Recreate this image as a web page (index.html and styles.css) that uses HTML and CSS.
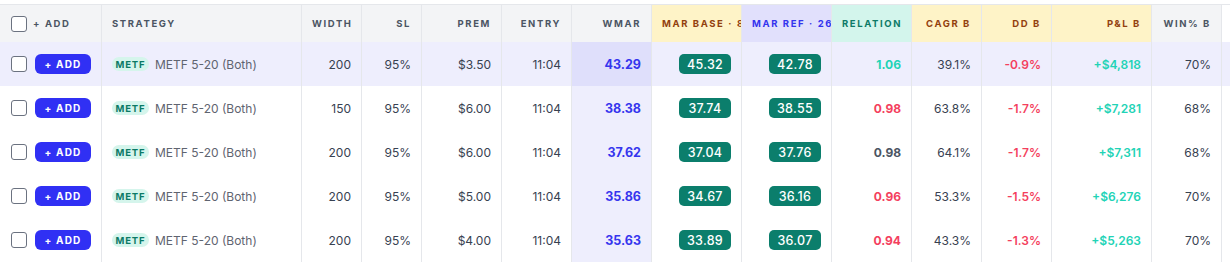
FILE: index.html
```html
<!DOCTYPE html>
<html>
<head>
<meta charset="utf-8">
<link rel="stylesheet" href="styles.css">
</head>
<body>
<div class="wrap">
<table class="grid">
<colgroup>
<col class="c-sel"><col class="c-strat"><col class="c-60"><col class="c-60"><col class="c-80"><col class="c-70"><col class="c-80"><col class="c-90"><col class="c-90"><col class="c-80"><col class="c-70"><col class="c-70"><col class="c-100"><col class="c-70"><col class="c-100">
</colgroup>
<thead>
<tr>
<th class="left"><div class="selhead"><span class="cb"></span><span>+ ADD</span></div></th>
<th class="left">STRATEGY</th>
<th>WIDTH</th>
<th>SL</th>
<th>PREM</th>
<th>ENTRY</th>
<th>WMAR</th>
<th class="left h-base clip">MAR BASE · 8W</th>
<th class="left h-ref clip">MAR REF · 26W</th>
<th class="h-rel">RELATION</th>
<th class="h-base">CAGR B</th>
<th class="h-base">DD B</th>
<th class="h-base">P&amp;L B</th>
<th>WIN% B</th>
<th class="h-blank"></th>
</tr>
</thead>
<tbody>
<tr class="sel">
<td><div class="selcell"><span class="cb"></span><span class="addbtn">+ ADD</span></div></td>
<td class="left"><div class="strat"><span class="pill">METF</span><span class="sname">METF 5-20 (Both)</span></div></td>
<td>200</td><td>95%</td><td>$3.50</td><td>11:04</td>
<td class="wmar">43.29</td>
<td><span class="badge">45.32</span></td>
<td><span class="badge">42.78</span></td>
<td class="pos b">1.06</td>
<td>39.1%</td>
<td class="neg m">-0.9%</td>
<td class="pos m">+$4,818</td>
<td>70%</td>
<td></td>
</tr>
<tr>
<td><div class="selcell"><span class="cb"></span><span class="addbtn">+ ADD</span></div></td>
<td class="left"><div class="strat"><span class="pill">METF</span><span class="sname">METF 5-20 (Both)</span></div></td>
<td>150</td><td>95%</td><td>$6.00</td><td>11:04</td>
<td class="wmar">38.38</td>
<td><span class="badge">37.74</span></td>
<td><span class="badge">38.55</span></td>
<td class="neg b">0.98</td>
<td>63.8%</td>
<td class="neg m">-1.7%</td>
<td class="pos m">+$7,281</td>
<td>68%</td>
<td></td>
</tr>
<tr>
<td><div class="selcell"><span class="cb"></span><span class="addbtn">+ ADD</span></div></td>
<td class="left"><div class="strat"><span class="pill">METF</span><span class="sname">METF 5-20 (Both)</span></div></td>
<td>200</td><td>95%</td><td>$6.00</td><td>11:04</td>
<td class="wmar">37.62</td>
<td><span class="badge">37.04</span></td>
<td><span class="badge">37.76</span></td>
<td class="neu b">0.98</td>
<td>64.1%</td>
<td class="neg m">-1.7%</td>
<td class="pos m">+$7,311</td>
<td>68%</td>
<td></td>
</tr>
<tr>
<td><div class="selcell"><span class="cb"></span><span class="addbtn">+ ADD</span></div></td>
<td class="left"><div class="strat"><span class="pill">METF</span><span class="sname">METF 5-20 (Both)</span></div></td>
<td>200</td><td>95%</td><td>$5.00</td><td>11:04</td>
<td class="wmar">35.86</td>
<td><span class="badge">34.67</span></td>
<td><span class="badge">36.16</span></td>
<td class="neg b">0.96</td>
<td>53.3%</td>
<td class="neg m">-1.5%</td>
<td class="pos m">+$6,276</td>
<td>70%</td>
<td></td>
</tr>
<tr>
<td><div class="selcell"><span class="cb"></span><span class="addbtn">+ ADD</span></div></td>
<td class="left"><div class="strat"><span class="pill">METF</span><span class="sname">METF 5-20 (Both)</span></div></td>
<td>200</td><td>95%</td><td>$4.00</td><td>11:04</td>
<td class="wmar">35.63</td>
<td><span class="badge">33.89</span></td>
<td><span class="badge">36.07</span></td>
<td class="neg b">0.94</td>
<td>43.3%</td>
<td class="neg m">-1.3%</td>
<td class="pos m">+$5,263</td>
<td>70%</td>
<td></td>
</tr>
</tbody>
</table>
</div>
</body>
</html>
```
FILE: styles.css
```css
html, body {
  margin: 0;
  padding: 0;
  background: #ffffff;
}
body {
  font-family: Inter, "Noto Sans", sans-serif;
  color: #374151;
}
.wrap {
  width: 1230px;
  height: 262px;
  overflow: hidden;
  padding-top: 4px;
  box-sizing: border-box;
}
.grid {
  table-layout: fixed;
  border-collapse: separate;
  border-spacing: 0;
  width: 1322px;
}
.c-sel { width: 102px; }
.c-strat { width: 200px; }
.c-60 { width: 60px; }
.c-70 { width: 70px; }
.c-80 { width: 80px; }
.c-90 { width: 90px; }
.c-100 { width: 100px; }

th, td {
  box-sizing: border-box;
  border-right: 1px solid #e5e7eb;
  padding: 0 10px;
  text-align: right;
  vertical-align: middle;
  white-space: nowrap;
}
th {
  height: 38px;
  border-top: 1px solid #e5e7eb;
  background: #f3f4f6;
  color: #4b5563;
  font-size: 9.5px;
  font-weight: 700;
  letter-spacing: 1.6px;
}
th.left, td.left { text-align: left; }
th:first-child, td:first-child { padding-left: 11px; text-align: left; }
th.clip { overflow: hidden; text-overflow: clip; }
th.h-base { background: #fef3c7; color: #92400e; }
th.h-ref { background: #e1e0fc; color: #3434ee; }
th.h-rel { background: #d3f5ec; color: #0d7a67; }
th.h-blank { background: #ffffff; border-right: none; }

td {
  height: 44px;
  font-size: 12px;
  color: #374151;
  background: #ffffff;
}
td:last-child { border-right: none; }
tr.sel td { background: #eeeefd; }
td.wmar {
  background: #eeeefd;
  color: #3535ee;
  font-weight: 700;
  font-size: 12.5px;
}
tr.sel td.wmar { background: #dfdffb; }

.selhead, .selcell {
  display: flex;
  align-items: center;
}
.selhead { gap: 6px; }
.selcell { gap: 8px; }
.cb {
  display: inline-block;
  width: 16px;
  height: 16px;
  box-sizing: border-box;
  border: 1.5px solid #6b7280;
  border-radius: 3px;
  background: #ffffff;
  flex: none;
}
.addbtn {
  display: inline-flex;
  align-items: center;
  justify-content: center;
  width: 56px;
  height: 20px;
  border-radius: 6px;
  background: #3030f4;
  color: #ffffff;
  font-size: 10px;
  font-weight: 700;
  letter-spacing: 1.2px;
}
.strat {
  display: flex;
  align-items: center;
  gap: 6px;
}
.pill {
  display: inline-flex;
  align-items: center;
  justify-content: center;
  width: 37px;
  height: 14px;
  border-radius: 7px;
  background: #d5f5ec;
  color: #0b7a66;
  font-size: 9.5px;
  font-weight: 700;
  letter-spacing: 0.9px;
}
.sname {
  color: #5f6470;
  font-size: 12px;
}
.badge {
  display: inline-flex;
  align-items: center;
  justify-content: center;
  width: 52px;
  height: 20px;
  border-radius: 5px;
  background: #0b7e6c;
  color: #ffffff;
  font-size: 12.5px;
  font-weight: 500;
  letter-spacing: 0.3px;
}
.pos { color: #22d3b6; }
.neg { color: #f43f5e; }
.neu { color: #4b5563; }
.b { font-weight: 700; }
.m { font-weight: 600; }
```
